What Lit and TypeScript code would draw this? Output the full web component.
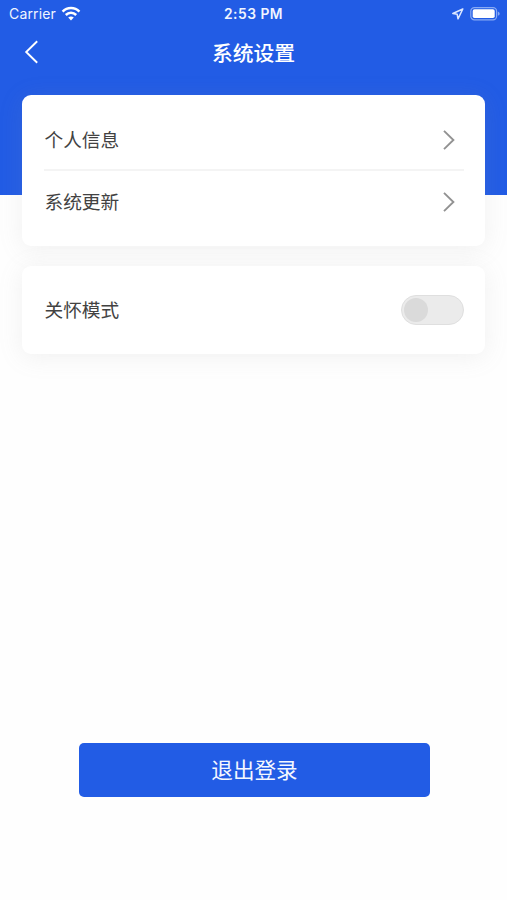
import { LitElement, html, css } from "lit";
import { customElement, property } from "lit/decorators.js";

@customElement("status-bar")
class StatusBar extends LitElement {
  static styles = css`
    :host {
      display: grid;
      grid-template-columns: 1fr auto 1fr;
      align-items: center;
      height: 28px;
      padding: 0 7px 0 9px;
      box-sizing: border-box;
      color: #f0f5ff;
      font-family: Inter, "Liberation Sans", sans-serif;
    }
    .left,
    .right {
      display: flex;
      align-items: center;
    }
    .left {
      gap: 5px;
      font-size: 14px;
      letter-spacing: 0.15px;
      padding-bottom: 1px;
    }
    .right {
      justify-content: flex-end;
      gap: 6px;
    }
    .time {
      margin-right: 2px;
      font-size: 13.8px;
      font-weight: 600;
      letter-spacing: 0.5px;
    }
    svg {
      display: block;
    }
  `;

  render() {
    return html`
      <div class="left">
        <span>Carrier</span>
        <svg width="20" height="15" viewBox="0 0 20 15" fill="none" stroke="#fff" stroke-width="2.5">
          <path d="M1.6 5.7C6.2 .9 13.8 .9 18.4 5.7" />
          <path d="M4.8 9C7.8 6 12.2 6 15.2 9" />
          <path d="M10 14.4 7.2 11.5Q10 9.3 12.8 11.5Z" fill="#fff" stroke="none" />
        </svg>
      </div>
      <span class="time">2:53 PM</span>
      <div class="right">
        <svg width="13" height="12" viewBox="0 0 13 12" fill="none" stroke="#dce7ff" stroke-width="1.5" stroke-linejoin="round">
          <path d="M11.8 1 1.8 5.5 6.2 6.3 7 10.8Z" />
        </svg>
        <svg width="30" height="14" viewBox="0 0 30 14">
          <rect x="0.8" y="0.6" width="25.8" height="12.2" rx="3.6" fill="none" stroke="#88aaf4" stroke-width="1.2" />
          <rect x="2.7" y="2.3" width="22" height="8.8" rx="1.8" fill="#fff" />
          <path d="M27.9 4.6Q29.7 5.4 29.7 6.7T27.9 8.8Z" fill="#88aaf4" />
        </svg>
      </div>
    `;
  }
}

@customElement("setting-row")
class SettingRow extends LitElement {
  @property() label = "";

  static styles = css`
    :host {
      display: flex;
      align-items: center;
      justify-content: space-between;
      color: #424242;
      font-size: 18.7px;
      line-height: 28px;
    }
    span {
      padding: 0 0 2px 0.5px;
    }
  `;

  render() {
    return html`<span>${this.label}</span><slot></slot>`;
  }
}

@customElement("app-root")
class AppRoot extends LitElement {
  static styles = css`
    :host {
      display: flex;
      flex-direction: column;
      height: 900px;
      box-sizing: border-box;
      background: linear-gradient(#225ce5 195px, #fefefe 195px);
      font-family: "Noto Sans CJK SC", sans-serif;
    }
    .nav {
      display: grid;
      grid-template-columns: 62px 1fr 62px;
      align-items: center;
      height: 48px;
      color: #fff;
    }
    .nav svg {
      margin-left: 24px;
    }
    .nav h1 {
      margin: 0;
      padding-bottom: 1px;
      text-align: center;
      font-size: 20.8px;
      font-weight: 500;
      line-height: 30px;
    }
    .card {
      margin: 0 22px;
      padding: 0 21px 0 22px;
      border-radius: 9px;
      background: #fff;
      box-shadow: 0 3px 24px rgba(150, 150, 150, 0.13);
    }
    .links {
      display: grid;
      grid-template-rows: 74px 2px 62px;
      height: 151px;
      box-sizing: border-box;
      margin-top: 19px;
    }
    .links .first {
      padding-top: 15px;
    }
    .line {
      background: #f4f4f4;
    }
    .chevron {
      margin-right: 8px;
    }
    .care {
      display: grid;
      height: 88px;
      margin-top: 19.5px;
    }
    .switch {
      display: flex;
      align-items: center;
      width: 63px;
      height: 30px;
      box-sizing: border-box;
      padding-left: 2px;
      border: 1px solid #dfdfdf;
      border-radius: 15px;
      background: #ebebeb;
    }
    .knob {
      width: 24px;
      height: 24px;
      border-radius: 50%;
      background: #dadada;
    }
    .logout {
      width: 351px;
      height: 54px;
      margin: 389.5px 0 0 79px;
      padding: 0 0 2px;
      border: 0;
      border-radius: 5px;
      background: #225ce5;
      color: #f4f7ff;
      font: 400 21.6px/32px "Noto Sans CJK SC", sans-serif;
    }
  `;

  private chevron() {
    return html`<svg class="chevron" width="14" height="20" viewBox="0 0 14 20" fill="none" stroke="#929292" stroke-width="1.9">
      <path d="M2 .9 11.4 10 2 19.1" />
    </svg>`;
  }

  render() {
    return html`
      <status-bar></status-bar>
      <div class="nav">
        <svg width="16" height="24" viewBox="0 0 16 24" fill="none" stroke="#fff" stroke-width="1.9">
          <path d="M13.2 1.2 2.2 12 13.2 22.8" />
        </svg>
        <h1>系统设置</h1>
      </div>
      <div class="card links">
        <setting-row class="first" label="个人信息">${this.chevron()}</setting-row>
        <div class="line"></div>
        <setting-row label="系统更新">${this.chevron()}</setting-row>
      </div>
      <div class="card care">
        <setting-row label="关怀模式">
          <div class="switch" role="switch" aria-checked="false"><div class="knob"></div></div>
        </setting-row>
      </div>
      <button class="logout">退出登录</button>
    `;
  }
}
